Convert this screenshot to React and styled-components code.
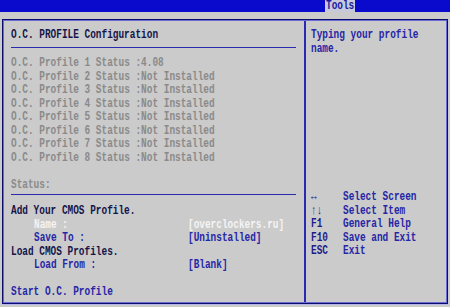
import React from "react"
import styled, { createGlobalStyle } from "styled-components"

const GlobalStyle = createGlobalStyle`
  html, body {
    margin: 0;
    padding: 0;
    background: #cbcbcb;
  }
  body {
    width: 450px;
    height: 307px;
    overflow: hidden;
    font-family: "Liberation Mono", "DejaVu Sans Mono", monospace;
  }
`

const profiles = [
  { n: 1, status: "4.08" },
  { n: 2, status: "Not Installed" },
  { n: 3, status: "Not Installed" },
  { n: 4, status: "Not Installed" },
  { n: 5, status: "Not Installed" },
  { n: 6, status: "Not Installed" },
  { n: 7, status: "Not Installed" },
  { n: 8, status: "Not Installed" },
]

const keys = [
  { key: "↔", desc: "Select Screen" },
  { key: "↑↓", desc: "Select Item" },
  { key: "F1", desc: "General Help" },
  { key: "F10", desc: "Save and Exit" },
  { key: "ESC", desc: "Exit" },
]

const App = () => (
  <Screen>
    <GlobalStyle />
    <TopBar>
      <Tab>
        <Text>Tools</Text>
      </Tab>
    </TopBar>
    <Frame>
      <MainPanel>
        <Title>
          <Text>O.C. PROFILE Configuration</Text>
        </Title>
        <Rule />
        <List>
          {profiles.map(p => (
            <Row key={p.n} tone="grey">
              <Text>
                O.C. Profile {p.n} Status :{p.status}
              </Text>
            </Row>
          ))}
          <Row />
          <Row tone="grey">
            <Text>Status:</Text>
          </Row>
        </List>
        <Rule tight />
        <List>
          <Row tone="dark">
            <Text>Add Your CMOS Profile.</Text>
          </Row>
          <Field tone="white">
            <Label indent>
              <Text>Name :</Text>
            </Label>
            <Text>[overclockers.ru]</Text>
          </Field>
          <Field tone="blue">
            <Label indent>
              <Text>Save To :</Text>
            </Label>
            <Text>[Uninstalled]</Text>
          </Field>
          <Row tone="dark">
            <Text>Load CMOS Profiles.</Text>
          </Row>
          <Field tone="blue">
            <Label indent>
              <Text>Load From :</Text>
            </Label>
            <Text>[Blank]</Text>
          </Field>
          <Row />
          <Row tone="blue">
            <Text>Start O.C. Profile</Text>
          </Row>
        </List>
      </MainPanel>
      <HelpPanel>
        <HelpText>
          <Row tone="blue">
            <Text>Typing your profile</Text>
          </Row>
          <Row tone="blue">
            <Text>name.</Text>
          </Row>
        </HelpText>
        <KeyList>
          {keys.map(k => (
            <KeyRow key={k.key}>
              <KeyName>
                <Text>{k.key}</Text>
              </KeyName>
              <Text>{k.desc}</Text>
            </KeyRow>
          ))}
        </KeyList>
      </HelpPanel>
    </Frame>
  </Screen>
)

const tones = {
  grey: "#8a8a8a",
  dark: "#14144a",
  blue: "#2626a6",
  white: "#f4f4f4",
}

const Screen = styled.div`
  width: 450px;
  height: 307px;
  display: flex;
  flex-direction: column;
`

const TopBar = styled.div`
  height: 12px;
  background: #0a0acc;
  display: flex;
  padding-left: 325px;
`

const Tab = styled.div`
  width: 30px;
  height: 12px;
  background: #c9c9dc;
  color: #1a1aa0;
  font-size: 12px;
  line-height: 12px;
  font-weight: 700;
  padding-left: 1px;
  box-sizing: border-box;

  span {
    transform: scaleX(0.785);
  }
`

const Text = styled.span`
  display: inline-block;
  white-space: pre;
  transform: scaleX(0.725);
  transform-origin: left center;
`

const Frame = styled.div`
  margin: 7px 0 0 2px;
  width: 446px;
  height: 285px;
  box-sizing: border-box;
  border: 1px solid #0c0c6a;
  box-shadow: inset 0 0 0 1px #6a6ad6, 0 1px 0 #b4b4e6;
  padding: 1px;
  display: grid;
  grid-template-columns: 302px 1fr;
`

const MainPanel = styled.div`
  border-right: 2px solid #2a2ab0;
  padding: 7px 8px 0 7px;
  display: flex;
  flex-direction: column;
`

const Title = styled.div`
  height: 14px;
  line-height: 14px;
  font-size: 13px;
  font-weight: 700;
  color: ${tones.dark};
`

const Rule = styled.div`
  height: 1px;
  background: #2a2ab0;
  margin: ${props => (props.tight ? "3px 0 9px 0" : "5px 0 8px 0")};
`

const List = styled.div`
  display: flex;
  flex-direction: column;
`

const Row = styled.div`
  height: 13.5px;
  line-height: 13.5px;
  font-size: 13px;
  font-weight: 700;
  color: ${props => tones[props.tone] || tones.dark};
`

const Field = styled(Row)`
  display: grid;
  grid-template-columns: 177px 1fr;
`

const Label = styled.div`
  padding-left: ${props => (props.indent ? "23px" : "0")};
`

const HelpPanel = styled.div`
  padding: 7px 0 0 5px;
  display: flex;
  flex-direction: column;
`

const HelpText = styled.div`
  display: flex;
  flex-direction: column;
  height: 162px;
`

const KeyList = styled.div`
  display: flex;
  flex-direction: column;
`

const KeyRow = styled.div`
  display: grid;
  grid-template-columns: 32px 1fr;
  height: 13.5px;
  line-height: 13.5px;
  font-size: 13px;
  font-weight: 700;
  color: ${tones.blue};
`

const KeyName = styled.div`
  color: #1c1c8c;
`

export default App
